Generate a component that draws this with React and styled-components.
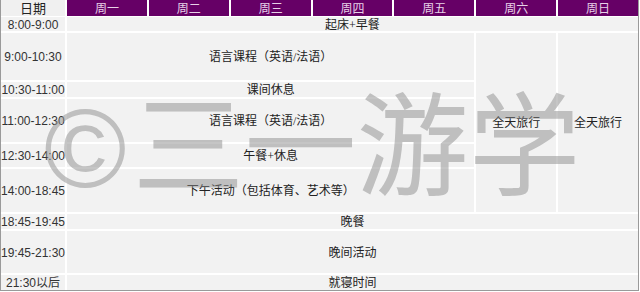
import React from "react";
import styled, { createGlobalStyle } from "styled-components";

const GlobalStyle = createGlobalStyle`
  html, body {
    margin: 0;
    padding: 0;
    background: #ffffff;
  }
`;

const days = ["周一", "周二", "周三", "周四", "周五", "周六", "周日"];
const times = [
  "8:00-9:00",
  "9:00-10:30",
  "10:30-11:00",
  "11:00-12:30",
  "12:30-14:00",
  "14:00-18:45",
  "18:45-19:45",
  "19:45-21:30",
  "21:30以后",
];

const activities = [
  { col: "2 / span 7", row: "1", text: "起床+早餐" },
  { col: "2 / span 5", row: "2", text: "语言课程（英语/法语）" },
  { col: "7", row: "2 / span 5", text: "全天旅行" },
  { col: "8", row: "2 / span 5", text: "全天旅行" },
  { col: "2 / span 5", row: "3", text: "课间休息" },
  { col: "2 / span 5", row: "4", text: "语言课程（英语/法语）" },
  { col: "2 / span 5", row: "5", text: "午餐+休息" },
  { col: "2 / span 5", row: "6", text: "下午活动（包括体育、艺术等）" },
  { col: "2 / span 7", row: "7", text: "晚餐" },
  { col: "2 / span 7", row: "8", text: "晚间活动" },
  { col: "2 / span 7", row: "9", text: "就寝时间" },
];

function App() {
  return (
    <>
      <GlobalStyle />
      <Page>
        <Table>
          <Head>
            <Corner>日期</Corner>
            {days.map((d) => (
              <DayCell key={d}>{d}</DayCell>
            ))}
          </Head>
          <Body>
            {times.map((t, i) => (
              <TimeCell key={t} $row={i + 1}>
                {t}
              </TimeCell>
            ))}
            {activities.map((a, i) => (
              <Cell key={i} $col={a.col} $row={a.row}>
                {a.text}
              </Cell>
            ))}
          </Body>
        </Table>
        <Watermark>
          <Copy>©</Copy>三一游学
        </Watermark>
      </Page>
    </>
  );
}

export default App;

const Page = styled.div`
  position: relative;
  width: 640px;
  height: 292px;
  overflow: hidden;
  background: #ffffff;
`;

const Table = styled.div`
  width: 639px;
  box-sizing: border-box;
  border-left: 1px solid #9a9a9a;
  border-right: 1px solid #9a9a9a;
  border-bottom: 1px solid #9a9a9a;
  background: #ffffff;
`;

const Head = styled.div`
  display: grid;
  grid-template-columns: 64px repeat(7, 1fr);
  column-gap: 2px;
  height: 16px;
  border-bottom: 1px solid #ffffff;
`;

const Corner = styled.div`
  display: flex;
  align-items: center;
  justify-content: center;
  background: #f0f0f0;
  color: #222;
  font-family: "Noto Sans CJK SC", sans-serif;
  font-size: 13px;
  line-height: 16px;
`;

const DayCell = styled.div`
  display: flex;
  align-items: center;
  justify-content: center;
  background: #660066;
  color: #e8d2e8;
  font-family: "Noto Sans CJK SC", sans-serif;
  font-size: 12px;
  line-height: 16px;
`;

const Body = styled.div`
  display: grid;
  grid-template-columns: 64px repeat(7, 1fr);
  grid-template-rows: 14px 47px 15px 43px 23px 43px 15px 42px 15px;
  gap: 2px;
`;

const TimeCell = styled.div`
  grid-column: 1;
  grid-row: ${(p) => p.$row};
  display: flex;
  align-items: center;
  justify-content: center;
  padding-top: 1px;
  background: #f2f2f2;
  color: #333;
  font-family: "Liberation Sans", "Noto Sans CJK SC", sans-serif;
  font-size: 12px;
  line-height: 14px;
  white-space: nowrap;
`;

const Cell = styled.div`
  grid-column: ${(p) => p.$col};
  grid-row: ${(p) => p.$row};
  display: flex;
  align-items: center;
  justify-content: center;
  padding-top: 1px;
  background: #f2f2f2;
  color: #222;
  font-family: "Liberation Serif", "Noto Sans CJK SC", serif;
  font-size: 12px;
  line-height: 14px;
  white-space: nowrap;
`;

const Watermark = styled.div`
  position: absolute;
  left: 44px;
  top: 82px;
  display: flex;
  align-items: baseline;
  color: rgba(140, 140, 140, 0.5);
  font-family: "Noto Sans CJK SC", sans-serif;
  font-size: 112px;
  line-height: 112px;
  white-space: nowrap;
  pointer-events: none;
`;

const Copy = styled.span`
  font-family: "Liberation Sans", sans-serif;
  margin-right: 6px;
`;
